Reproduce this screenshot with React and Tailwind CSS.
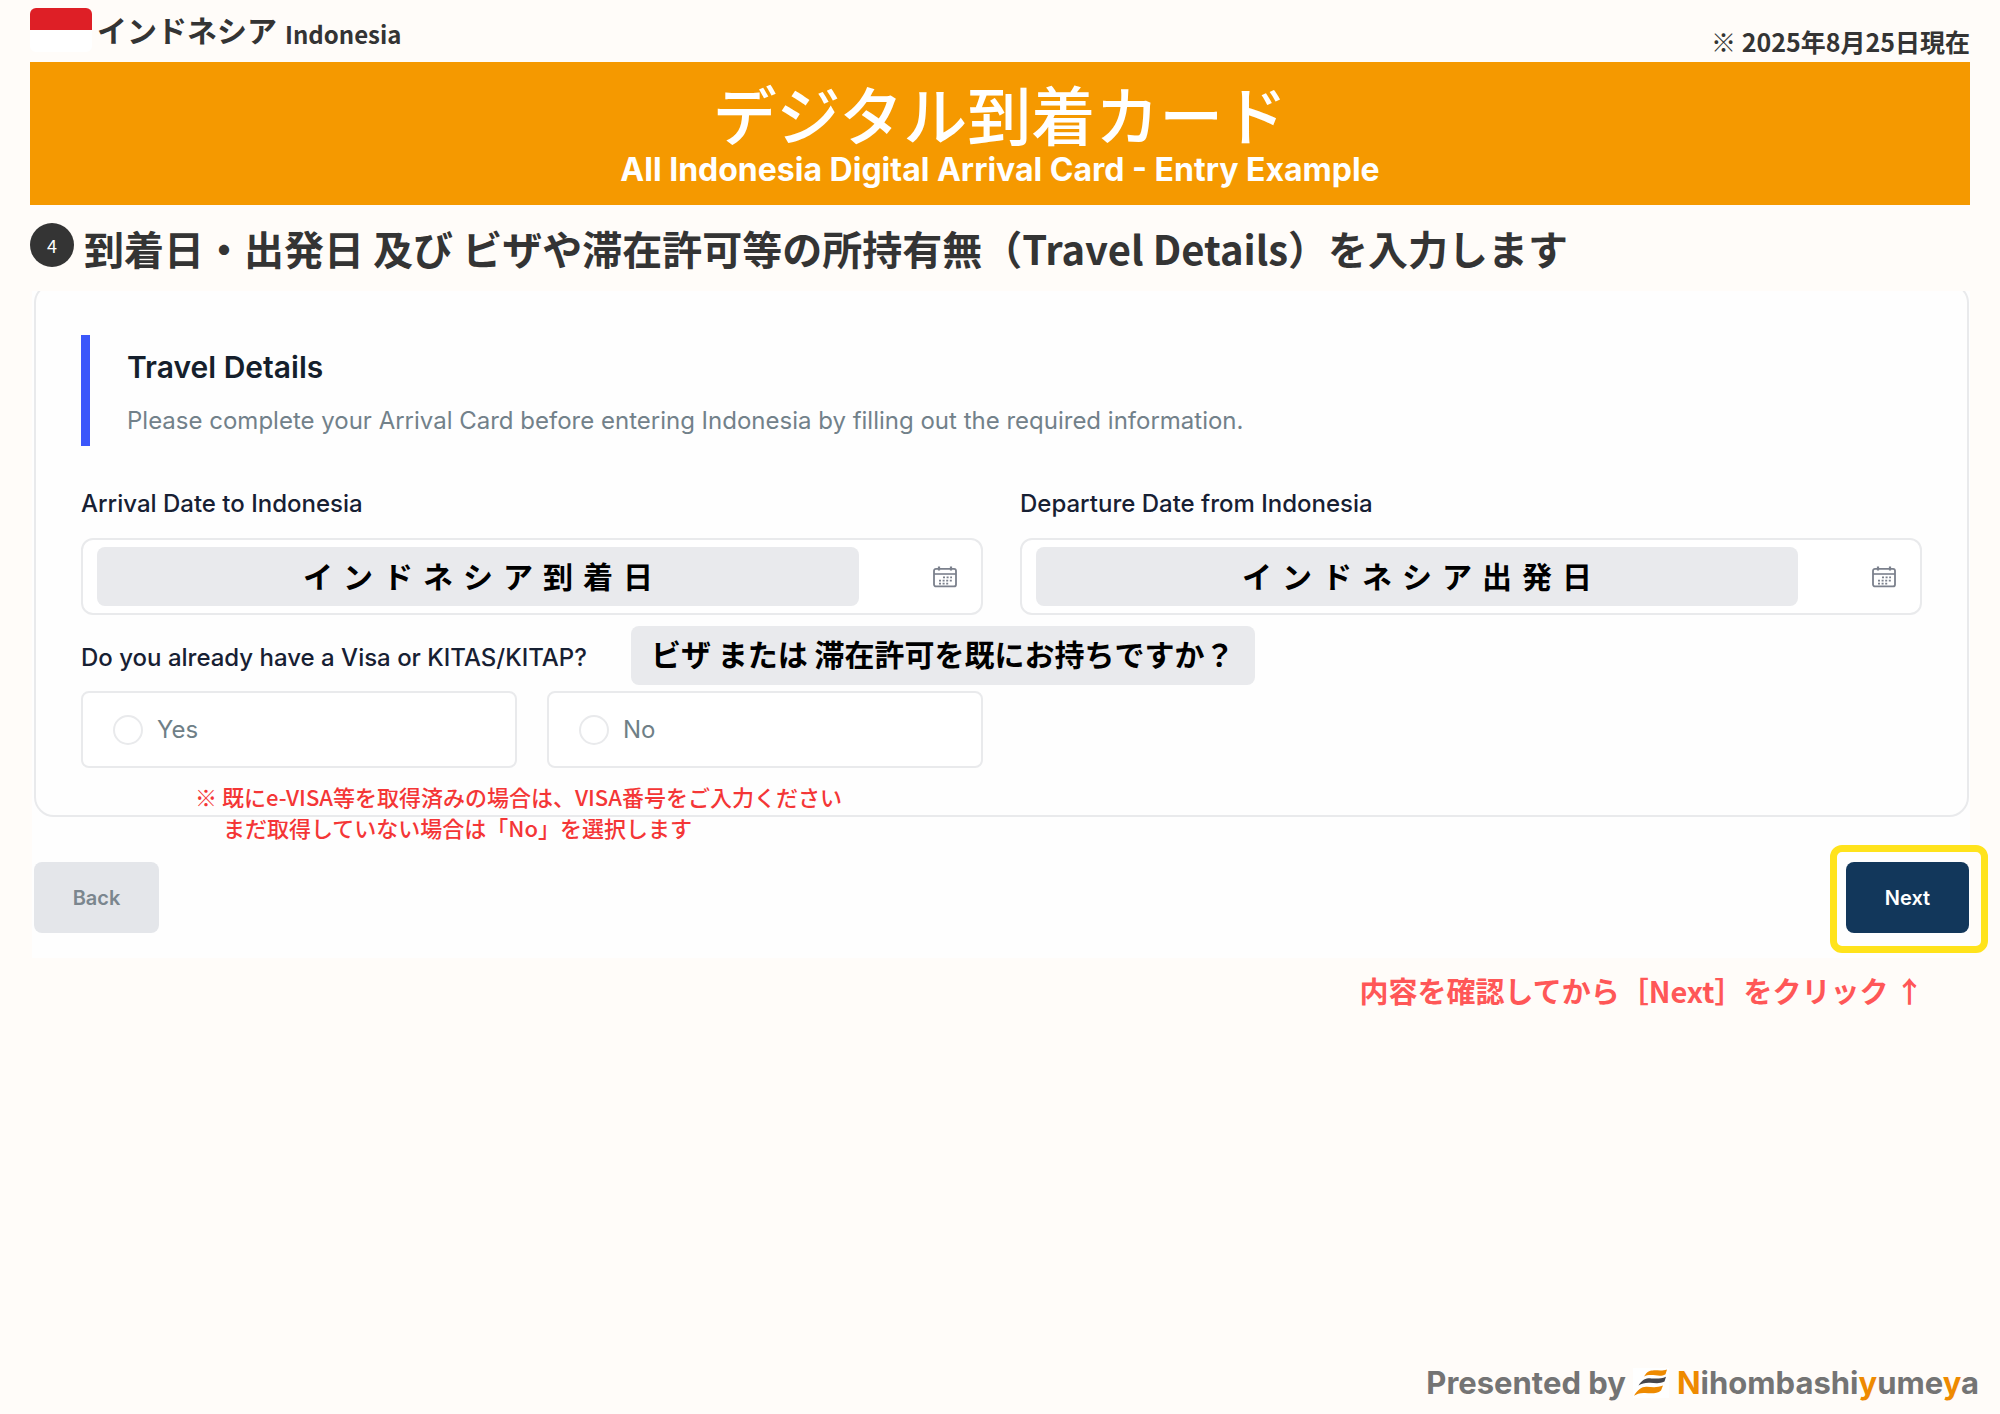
import React from "react";

function CalendarIcon() {
  return (
    <svg viewBox="0 0 24 22" className="h-[22px] w-6" fill="none" stroke="#7b808c" aria-hidden="true">
      <rect x="1" y="2.8" width="22" height="17.6" rx="2" strokeWidth="1.8" />
      <path d="M1 8h22" strokeWidth="1.6" />
      <path d="M6 0.5v4M18 0.5v4" strokeWidth="2.2" />
      <path d="M10 11.3h9M6 14.6h13M6 17.6h9.5" strokeWidth="1.8" strokeDasharray="2 1.6" />
    </svg>
  );
}

function BrandMark() {
  return (
    <svg viewBox="0 0 36 30" className="h-[30px] w-9" aria-hidden="true">
      <rect x="0" y="0" width="36" height="30" fill="#fff" />
      <path d="M11 8.5C14 3.5 16 2.6 20 2.4C25 2.2 29 3.2 34 1.6L32.5 6.2C28 9 23 7 18 7C15 7 13 7.4 11 8.5Z" fill="#ee8a00" />
      <path d="M5.500 17.500C10 11 13 10.200 18 10.400C23 10.600 28 11 33 8.800L31.500 13.500C27 16 22 15 17 14.800C12 14.600 9 15.500 5.500 17.500Z" fill="#45464c" />
      <path d="M1 27.800C5 21 9 18.400 14 18.800C19 19.200 24 20 30 17.600L28 22.500C24 26 18 25.400 12 25C7 24.700 4 26 1 27.800Z" fill="#ee8a00" />
    </svg>
  );
}

function DateField({ id, label, value }) {
  return (
    <div className="min-w-0 flex-1">
      <label htmlFor={id} className="block text-[24px] leading-9 font-medium text-[#172033]">
        {label}
      </label>
      <div className="mt-4 flex h-[77px] items-center gap-6 rounded-xl border-2 border-[#e9eaec] bg-white pr-6 pl-[14px]">
        <input
          id={id}
          type="text"
          readOnly
          defaultValue={value}
          className="h-[59px] w-[762px] min-w-0 rounded-lg bg-[#e9eaed] pb-1 pl-[10px] text-center font-['Noto_Sans_CJK_JP',sans-serif] text-[30px] font-bold tracking-[10px] text-black outline-none"
        />
        <button type="button" aria-label={label} className="ml-auto">
          <CalendarIcon />
        </button>
      </div>
    </div>
  );
}

function Choice({ label }) {
  return (
    <label className="flex h-[77px] min-w-0 flex-1 items-center gap-[14px] rounded-lg border-2 border-[#e9eaec] bg-white pl-[30px] text-[24px] text-[#6f7f87]">
      <input
        type="radio"
        name="visa"
        className="size-[30px] appearance-none rounded-full border-2 border-[#e9eaec] bg-white checked:border-[9px] checked:border-[#12375b]"
      />
      {label}
    </label>
  );
}

export default function App() {
  return (
    <div className="flex min-h-screen flex-col bg-[#fffcf9] font-['Inter','Noto_Sans_CJK_JP',sans-serif]">
      <header className="px-[30px] font-['Noto_Sans_CJK_JP',sans-serif] text-[#343434]">
        <div className="flex h-[62px] justify-between pt-2">
          <div className="flex items-start">
            <div className="h-11 w-[62px] overflow-hidden rounded-md bg-white">
              <div className="h-[22px] bg-[#de1f26]" />
            </div>
            <p className="ml-[5px] flex items-start gap-2 font-bold">
              <span className="text-[30px] leading-[42px]">インドネシア</span>
              <span className="text-[24px] leading-[52px]">Indonesia</span>
            </p>
          </div>
          <p className="pt-[15px] text-[25px] leading-9 font-bold">※ 2025年8月25日現在</p>
        </div>
        <div className="flex h-[143px] flex-col items-center bg-[#f59900] pt-4 text-white">
          <h1 className="text-[64px] leading-[68px] font-medium">デジタル到着カード</h1>
          <p className="mt-1 font-['Inter',sans-serif] text-[32px] leading-10 font-bold">
            All Indonesia Digital Arrival Card - Entry Example
          </p>
        </div>
        <div className="flex h-[86px] items-start pt-[18px]">
          <span className="flex size-11 shrink-0 items-center justify-center rounded-full bg-[#343434] text-[18px] leading-none text-white">
            4
          </span>
          <h2 className="ml-[10px] text-[40px] leading-[51px] font-bold">
            到着日・出発日 及び ビザや滞在許可等の所持有無（Travel Details）を入力します
          </h2>
        </div>
      </header>

      <main className="px-[30px]">
        <div className="ml-[2px] bg-[#fefefe] pr-px pb-[25px] pl-[2px]">
          <div className="overflow-hidden">
            <section className="-mt-2 rounded-[20px] border-2 border-[#e9eaec] bg-[#fefefe] px-[45px] pt-[50px] pb-[47px]">
              <div className="h-[111px] border-l-[9px] border-[#3b57fb] pt-[9px] pl-[37px]">
                <h3 className="text-[30px] leading-[46px] font-semibold text-[#151f2c]">Travel Details</h3>
                <p className="mt-2 text-[24px] leading-[46px] text-[#72818a]">
                  Please complete your Arrival Card before entering Indonesia by filling out the required information.
                </p>
              </div>
              <div className="mt-10 flex gap-[37px]">
                <DateField id="arrival" label="Arrival Date to Indonesia" value="インドネシア到着日" />
                <DateField id="departure" label="Departure Date from Indonesia" value="インドネシア出発日" />
              </div>
              <fieldset className="mt-[11px]">
                <legend className="flex items-center gap-11">
                  <span className="pt-1 text-[24px] font-medium text-[#172033]">
                    Do you already have a Visa or KITAS/KITAP?
                  </span>
                  <span className="flex h-[59px] items-center rounded-lg bg-[#e9eaed] px-5 pb-1 font-['Noto_Sans_CJK_JP',sans-serif] text-[30px] font-bold text-black">
                    ビザ または 滞在許可を既にお持ちですか？
                  </span>
                </legend>
                <div className="mt-[6px] flex gap-[37px]">
                  <div className="flex min-w-0 flex-1 gap-[30px]">
                    <Choice label="Yes" />
                    <Choice label="No" />
                  </div>
                  <div className="min-w-0 flex-1" />
                </div>
              </fieldset>
            </section>
          </div>

          <div className="relative flex items-start justify-between pt-[45px]">
            <p className="absolute top-[-36px] left-[161px] font-['Noto_Sans_CJK_JP',sans-serif] text-[22px] leading-[31px] font-medium text-[#f43636]">
              ※ 既にe-VISA等を取得済みの場合は、VISA番号をご入力ください
              <span className="block pl-7">まだ取得していない場合は「No」を選択します</span>
            </p>
            <button
              type="button"
              className="h-[71px] w-[125px] rounded-lg bg-[#e4e6ea] text-[20px] font-semibold text-[#7b868e]"
            >
              Back
            </button>
            <div className="relative">
              <button
                type="button"
                className="h-[71px] w-[123px] rounded-lg bg-[#12375b] text-[20px] font-semibold text-white"
              >
                Next
              </button>
              <div className="pointer-events-none absolute -top-[17px] -right-[19px] -bottom-[20px] -left-[16px] rounded-xl border-[7px] border-[#ffe31c]" />
            </div>
          </div>
        </div>
        <p className="mt-2 pr-[46px] text-right font-['Noto_Sans_CJK_JP',sans-serif] text-[29px] leading-[48px] font-bold text-[#ff5757]">
          内容を確認してから［Next］をクリック ↑
        </p>
      </main>

      <footer className="mt-auto flex items-center justify-end pr-[21px] pb-[11px] text-[31px] leading-10 font-bold text-[#747474]">
        <span>Presented by</span>
        <span className="mr-2 ml-[7px]">
          <BrandMark />
        </span>
        <span>
          <span className="text-[#ee8a00]">N</span>ihombashi<span className="text-[#ee8a00]">y</span>ume
          <span className="text-[#ee8a00]">y</span>a
        </span>
      </footer>
    </div>
  );
}
